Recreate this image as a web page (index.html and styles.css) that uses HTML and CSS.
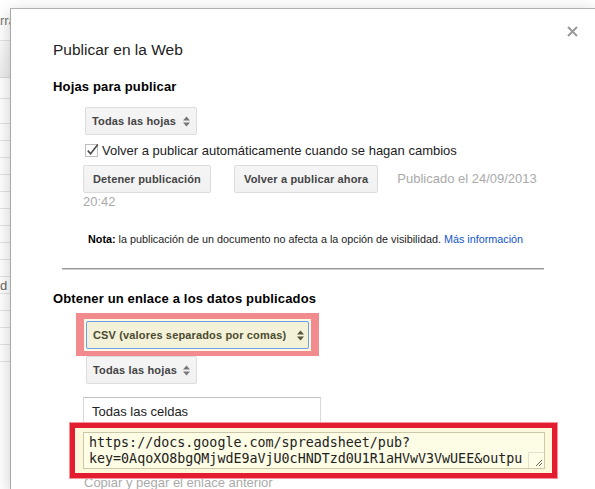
FILE: index.html
```html
<!DOCTYPE html>
<html lang="es">
<head>
<meta charset="utf-8">
<title>Publicar en la Web</title>
<link rel="stylesheet" href="styles.css">
</head>
<body>
<div class="screen">
  <div class="sheet">
    <div class="sheet-top"><span class="sheet-label">Barra</span></div>
    <div class="sheet-band"></div>
    <div class="sheet-row first"></div>
    <div class="sheet-row second"></div>
    <div class="sheet-row"></div>
    <div class="sheet-row"></div>
    <div class="sheet-row"></div>
    <div class="sheet-row"></div>
    <div class="sheet-row"></div>
    <div class="sheet-row"></div>
    <div class="sheet-row"></div>
    <div class="sheet-row"></div>
    <div class="sheet-row"></div>
    <div class="sheet-row"><span class="cell-text">d</span></div>
    <div class="sheet-row"></div>
    <div class="sheet-row"></div>
    <div class="sheet-row"></div>
    <div class="sheet-row"></div>
  </div>

  <div class="dialog">
    <svg class="close" width="11" height="11" viewBox="0 0 11 11" aria-label="Cerrar">
      <path d="M1 1 L10 10 M10 1 L1 10" stroke="#9a9a9a" stroke-width="2" fill="none"/>
    </svg>
    <div class="content">
      <h1 class="title">Publicar en la Web</h1>

      <h2 class="section-title">Hojas para publicar</h2>
      <div class="select select-sheets">
        <span>Todas las hojas</span>
        <svg class="arrows" width="7" height="11" viewBox="0 0 7 11"><path d="M0 4.5 L3.5 0.5 L7 4.5 Z M0 6.5 L3.5 10.5 L7 6.5 Z" fill="#777"/></svg>
      </div>

      <div class="check-row">
        <svg class="checkbox" width="15" height="14" viewBox="0 0 15 14">
          <rect x="0.5" y="1.5" width="12" height="12" fill="#fff" stroke="#bdbdbd"/>
          <path d="M2.8 7.6 L5.6 10.8 L12.8 1.6" fill="none" stroke="#4a4a4a" stroke-width="1.6"/>
        </svg>
        <span>Volver a publicar automáticamente cuando se hagan cambios</span>
      </div>

      <div class="publish-row"><button class="btn btn-stop">Detener publicación</button><button class="btn btn-republish">Volver a publicar ahora</button><span class="published">Publicado el 24/09/2013 20:42</span></div>

      <p class="note"><b>Nota:</b> la publicación de un documento no afecta a la opción de visibilidad. <a href="#">Más información</a></p>

      <div class="divider"></div>

      <h2 class="section-title second">Obtener un enlace a los datos publicados</h2>

      <div class="highlight-soft">
        <div class="select select-format">
          <span>CSV (valores separados por comas)</span>
          <svg class="arrows" width="7" height="11" viewBox="0 0 7 11"><path d="M0 4.5 L3.5 0.5 L7 4.5 Z M0 6.5 L3.5 10.5 L7 6.5 Z" fill="#55553a"/></svg>
        </div>
      </div>

      <div class="select select-sheets2">
        <span>Todas las hojas</span>
        <svg class="arrows" width="7" height="11" viewBox="0 0 7 11"><path d="M0 4.5 L3.5 0.5 L7 4.5 Z M0 6.5 L3.5 10.5 L7 6.5 Z" fill="#777"/></svg>
      </div>

      <input class="range-input" type="text" value="Todas las celdas">

      <div class="link-wrap">
        <div class="annot-red"></div>
        <div class="link-box">https://docs.google.com/spreadsheet/pub?<br>key=0AqoXO8bgQMjwdE9aVjU0cHNDTzd0U1R1aHVwV3VwUEE&amp;outpu
          <svg class="grip" width="16" height="16" viewBox="0 0 16 16">
            <path d="M0.5 16 V0.5 H16" fill="none" stroke="#e2e1d0"/>
            <path d="M14 8 L8 14 M14 11 L11 14" stroke="#666" stroke-width="1"/>
          </svg>
        </div>
      </div>

      <p class="help">Copiar y pegar el enlace anterior</p>
    </div>
  </div>
</div>
</body>
</html>
```

FILE: styles.css
```css
* { box-sizing: border-box; }
html, body { margin: 0; padding: 0; }
body {
  width: 595px;
  height: 489px;
  overflow: hidden;
  background: #fff;
  font-family: "Liberation Sans", Arial, sans-serif;
  color: #222;
}
.screen { display: flex; height: 489px; }

/* spreadsheet behind the dialog */
.sheet {
  width: 10px;
  flex: none;
  overflow: hidden;
  font-size: 13px;
  color: #777;
  white-space: nowrap;
}
.sheet-top {
  height: 41px;
  border-bottom: 1px solid #e3e3e3;
  padding-top: 13px;
  line-height: 16px;
}
.sheet-label { display: inline-block; margin-left: -16px; }
.sheet-band {
  height: 37px;
  background: linear-gradient(#fafafa, #ededed);
  border-bottom: 1px solid #d9d9d9;
}
.sheet-row { height: 17px; border-bottom: 1px solid #e3e3e3; line-height: 16px; color: #666; }
.sheet-row.first { height: 21px; }
.sheet-row.second { height: 25px; }
.cell-text { display: inline-block; padding-top: 1px; }

/* dialog */
.dialog {
  flex: 1;
  margin-top: 8px;
  position: relative;
  background: #fff;
  border-top: 1px solid #b0b0b0;
  border-left: 1px solid #a8a8a8;
  box-shadow: 0 4px 16px rgba(0, 0, 0, .2);
  padding: 31px 0 0 42px;
}
.close { position: absolute; top: 17px; right: 17px; }
.content { width: 492px; }

.title {
  margin: 0;
  font-size: 15.5px;
  font-weight: normal;
  line-height: 20px;
  color: #222;
}
.section-title {
  margin: 19px 0 0;
  font-size: 13px;
  font-weight: bold;
  letter-spacing: .15px;
  line-height: 16px;
  color: #000;
}
.section-title.second { margin-top: 21px; }

.select {
  display: flex;
  align-items: center;
  height: 28px;
  padding: 0 6px;
  border: 1px solid #dcdcdc;
  border-radius: 2px;
  background: linear-gradient(#f5f5f5, #f1f1f1);
  color: #444;
  font-size: 11px;
  font-weight: bold;
  letter-spacing: .15px;
  white-space: nowrap;
}
.arrows { margin-left: auto; flex: none; }
.select-sheets { width: 112px; margin: 12px 0 0 32px; }
.select-sheets2 { width: 111px; margin: 0 0 0 33px; }

.check-row {
  display: flex;
  align-items: flex-start;
  gap: 2px;
  margin: 8px 0 0 32px;
  font-size: 13px;
  line-height: 16px;
  color: #222;
}
.checkbox { flex: none; }

.publish-row {
  margin: 6px 0 0 30px;
  font-size: 13px;
  line-height: 18px;
  color: #aaa;
}
.btn {
  display: inline-block;
  height: 28px;
  line-height: 26px;
  padding: 0 9px;
  margin: 0;
  border: 1px solid #dcdcdc;
  border-radius: 2px;
  background: linear-gradient(#f5f5f5, #f1f1f1);
  color: #444;
  font-family: inherit;
  font-size: 11px;
  font-weight: bold;
  letter-spacing: .15px;
  vertical-align: baseline;
}
.btn-stop { margin-right: 23px; }
.btn-republish { margin-right: 19px; }

.note {
  margin: 21px 0 0 35px;
  font-size: 10.8px;
  line-height: 14px;
  color: #222;
}
.note b { color: #000; }
.note a { color: #1155cc; text-decoration: none; }

.divider {
  margin: 22px 0 0 9px;
  width: 482px;
  height: 2px;
  border-top: 1px solid #9a9a9a;
  border-bottom: 1px solid #cdcdcd;
}

.highlight-soft {
  width: 243px;
  margin: 6px 0 0 23px;
  border: 8px solid #f28b8d;
  border-top-width: 6px;
  border-bottom-width: 5px;
  padding: 2px;
  background: #fdf9e6;
}
.select-format {
  width: 223px;
  padding: 0 4px 0 6px;
  background: #f3f1d8;
  border-color: #6b9ee6;
  color: #4b4b30;
}

.range-input {
  display: block;
  margin: 13px 0 0 30px;
  width: 238px;
  height: 28px;
  padding: 0 8px;
  border: 1px solid #d9d9d9;
  border-top-color: #c0c0c0;
  border-radius: 0;
  font-family: "Liberation Sans", Arial, sans-serif;
  font-size: 13px;
  color: #222;
  background: #fff;
}

.link-wrap {
  position: relative;
  margin: 7px 0 0 30px;
  width: 462px;
}
.link-box {
  position: relative;
  z-index: 2;
  height: 37px;
  padding: 2px 5px;
  border: 1px solid #cac8a8;
  background: #fdfce4;
  font-family: "DejaVu Sans Mono", monospace;
  font-size: 13.33px;
  line-height: 15.5px;
  color: #222;
  white-space: nowrap;
  overflow: hidden;
}
.grip { position: absolute; right: 0; bottom: 0; }
.annot-red {
  position: absolute;
  z-index: 1;
  left: -13px;
  right: -12px;
  top: -9px;
  bottom: -9px;
  border: 5px solid #e31c2f;
  box-shadow: 0 0 0 1px #f3949b;
  background: #fbf8dc;
}

.help {
  margin: 6px 0 0 31px;
  font-size: 13px;
  line-height: 16px;
  color: #aaa;
}
```
